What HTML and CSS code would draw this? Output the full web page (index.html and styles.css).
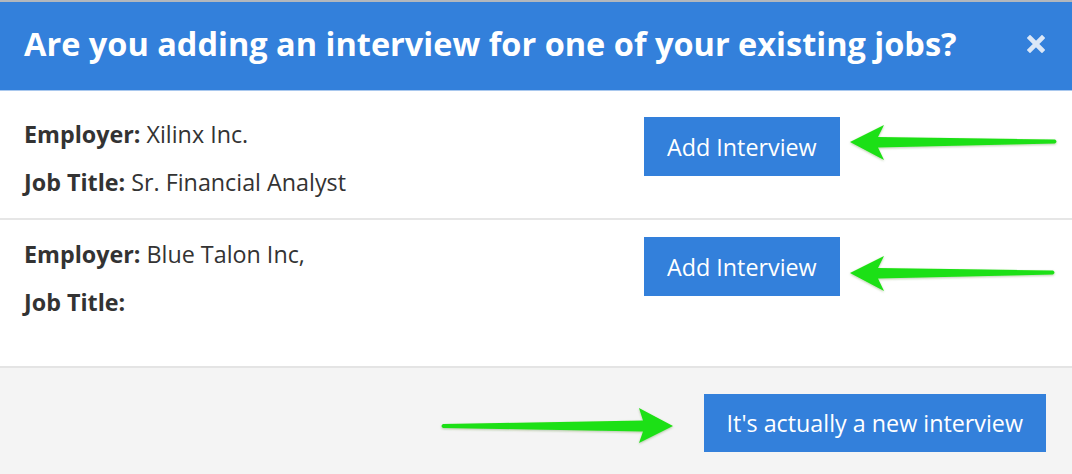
FILE: index.html
```html
<!DOCTYPE html>
<html lang="en">
<head>
<meta charset="utf-8">
<title>Add interview</title>
<link rel="stylesheet" href="styles.css">
</head>
<body>
<div class="modal">
  <header class="modal-header">
    <h1 class="modal-title">Are you adding an interview for one of your existing jobs?</h1>
    <button class="close" aria-label="Close">
      <svg width="18" height="18" viewBox="0 0 18 18"><path d="M3 3 L15 15 M15 3 L3 15" stroke="#dbe7f7" stroke-width="4.6" stroke-linecap="square"/></svg>
    </button>
  </header>
  <div class="modal-body">
    <div class="job-row">
      <div class="job-info">
        <p><b>Employer:</b> Xilinx Inc.</p>
        <p><b>Job Title:</b> Sr. Financial Analyst</p>
      </div>
      <button class="btn">Add Interview</button>
    </div>
    <div class="job-row">
      <div class="job-info">
        <p><b>Employer:</b> Blue Talon Inc,</p>
        <p><b>Job Title:</b> </p>
      </div>
      <button class="btn">Add Interview</button>
    </div>
  </div>
  <footer class="modal-footer">
    <button class="btn">It's actually a new interview</button>
  </footer>
  <svg class="arrows" width="1072" height="474" viewBox="0 0 1072 474">
    <defs>
      <filter id="sh" x="-10%" y="-50%" width="120%" height="200%">
        <feDropShadow dx="0" dy="1" stdDeviation="1" flood-color="#3a6a20" flood-opacity="0.35"/>
      </filter>
    </defs>
    <g fill="#1fe014" filter="url(#sh)">
      <path d="M850 142 L884 125 L878 137 L1055 139.5 Q1058 141.5 1055 143.5 L878 147.5 L884 160 Z"/>
      <path d="M850 273 L884 256 L878 268 L1053 270.5 Q1056 272.5 1053 274.5 L878 278.5 L884 291 Z"/>
      <path d="M673 426 L639 408 L643 420.5 L443 424 Q440 426 443 428 L643 431.5 L639 443 Z"/>
    </g>
  </svg>
</div>
</body>
</html>
```

FILE: styles.css
```css
* { box-sizing: border-box; }

html, body {
  margin: 0;
  padding: 0;
  background: #ffffff;
}

body {
  font-family: "Open Sans", "Noto Sans", "Liberation Sans", sans-serif;
  color: #333333;
  width: 1072px;
  height: 474px;
  overflow: hidden;
}

.modal {
  position: relative;
  width: 1072px;
  height: 474px;
  border-top: 2px solid #b2b7bd;
  display: flex;
  flex-direction: column;
}

.modal-header {
  height: 89px;
  flex: none;
  background: #3380db;
  border-bottom: 1px solid #a9c8ee;
  display: flex;
  align-items: center;
  justify-content: space-between;
  padding: 0 27px 5px 24px;
}

.modal-title {
  margin: 0;
  color: #ffffff;
  font-size: 32.5px;
  line-height: 40px;
  font-weight: 700;
  white-space: nowrap;
}

.close {
  background: none;
  border: 0;
  padding: 0;
  width: 18px;
  height: 18px;
  display: flex;
}

.modal-body {
  padding: 9px 0 28px;
  flex: none;
}

.job-row {
  display: grid;
  grid-template-columns: 620px auto;
  align-items: start;
  padding: 18px 0 20px 24px;
  border-bottom: 2px solid #e6e6e6;
}

.job-row:last-child {
  border-bottom: 0;
}

.job-info {
  display: flex;
  flex-direction: column;
  gap: 16px;
}

.job-info p {
  margin: 0;
  font-size: 23.3px;
  line-height: 32px;
  white-space: nowrap;
}

.job-info b {
  font-weight: 700;
}

.btn {
  font-family: inherit;
  background: #3380db;
  color: #ffffff;
  border: 0;
  border-radius: 0;
  height: 59px;
  margin-top: -1px;
  padding: 0 23px;
  font-size: 23.3px;
  white-space: nowrap;
  justify-self: start;
}

.modal-footer {
  flex: 1;
  background: #f4f4f4;
  border-top: 2px solid #e4e4e4;
  display: flex;
  justify-content: flex-end;
  align-items: flex-start;
  padding: 26px 26px 0 0;
}

.modal-footer .btn {
  height: 58px;
  margin-top: 0;
  padding: 0 23px;
}

.arrows {
  position: absolute;
  left: 0;
  top: -2px;
  pointer-events: none;
}
```
